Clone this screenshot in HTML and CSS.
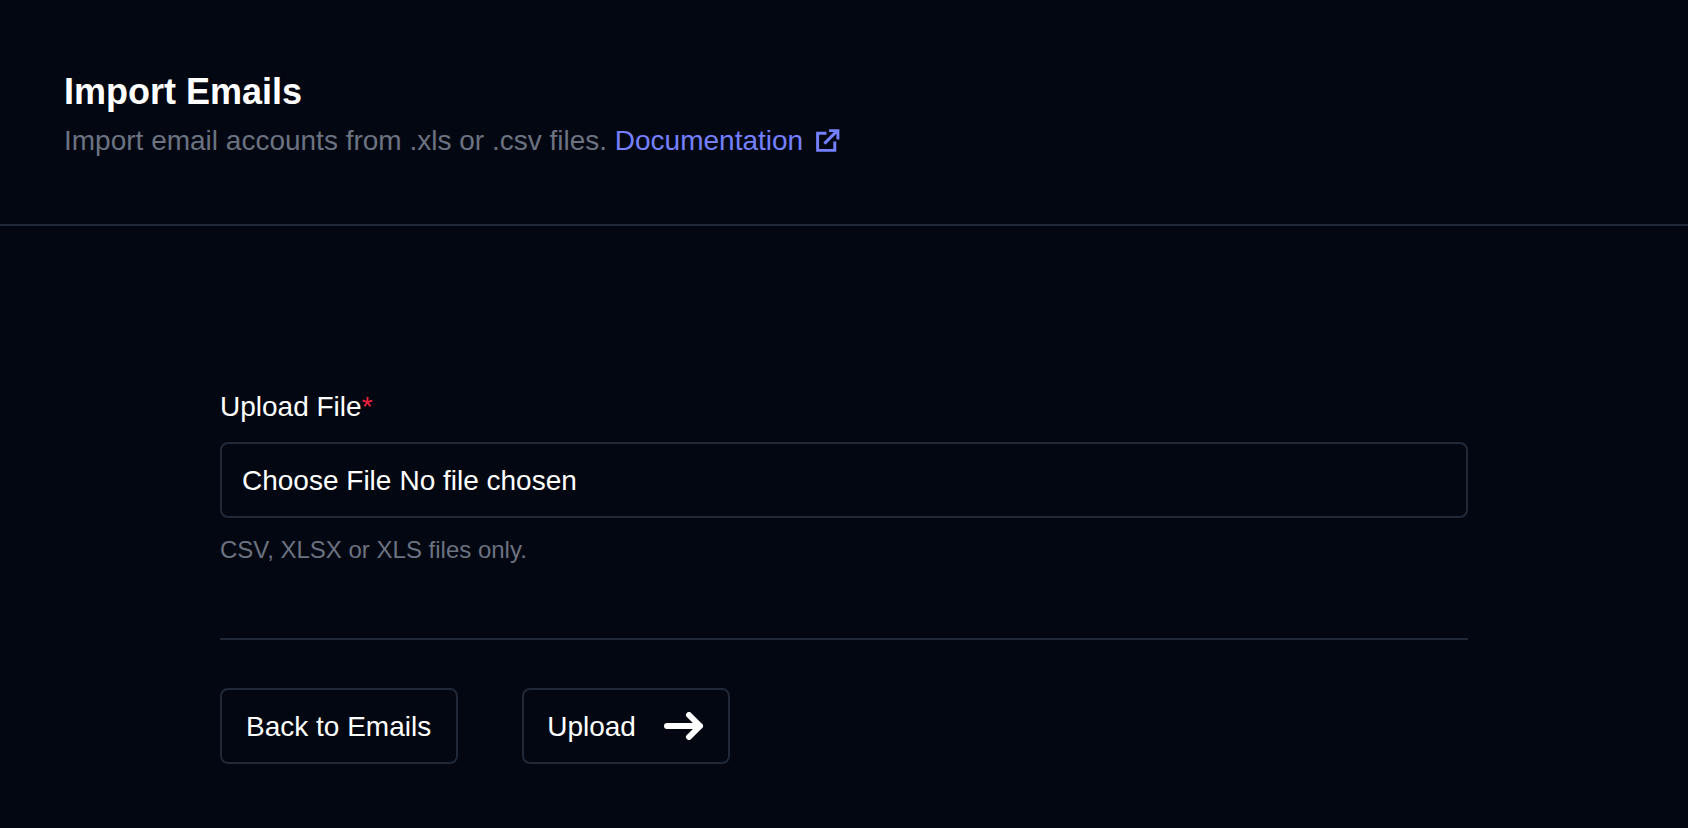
FILE: index.html
```html
<!DOCTYPE html>
<html lang="en">
  <head>
    <meta charset="UTF-8" />
    <title>Import Emails</title>
    <link rel="stylesheet" href="styles.css">
  </head>
  <body>
    <header class="page-header">
      <h1>Import Emails</h1>
      <p>
        Import email accounts from .xls or .csv files.
        <a href="#" class="doc-link">Documentation
          <svg class="external-icon" viewBox="0 0 24 24" fill="none" stroke="currentColor" stroke-width="2.8" stroke-linecap="butt">
            <path d="M11 5H2.5v16.5H19V13" />
            <path d="M9 15L21.5 2.5M13.5 2.5h8.5v8.5" />
          </svg>
        </a>
      </p>
    </header>
    <main class="content">
      <form class="upload-form">
        <label for="emailFile">Upload File<span class="required">*</span></label>
        <input type="file" id="emailFile" name="emailFile" class="file-input" />
        <p class="hint">CSV, XLSX or XLS files only.</p>
        <div class="form-actions">
          <a href="#" class="btn btn-back">Back to Emails</a>
          <button type="button" class="btn btn-upload">
            Upload
            <svg class="arrow-icon" viewBox="0 0 40 28" fill="none" stroke="currentColor" stroke-width="6" stroke-linecap="round" stroke-linejoin="round">
              <path d="M3 14h33M25 3l11 11-11 11" />
            </svg>
          </button>
        </div>
      </form>
    </main>
  </body>
</html>
```

FILE: styles.css
```css
* {
  box-sizing: border-box;
}
body {
  margin: 0;
  height: 828px;
  overflow: hidden;
  background-color: #030712;
  color: #fff;
  font-family: "Liberation Sans", Arial, sans-serif;
  font-size: 28px;
}
.page-header {
  height: 226px;
  padding: 69px 64px 0;
  border-bottom: 2px solid #1f2937;
}
.page-header h1 {
  margin: 0;
  font-size: 36px;
  line-height: 46px;
  font-weight: 700;
}
.page-header p {
  margin: 3px 0 0;
  font-size: 28px;
  line-height: 46px;
  color: #6b7280;
}
.doc-link {
  color: #7480ff;
  text-decoration: none;
}
.external-icon {
  width: 25px;
  height: 25px;
  margin-left: 4px;
  vertical-align: -3px;
}
.content {
  padding: 161px 220px 0;
}
.upload-form label {
  display: block;
  line-height: 40px;
}
.required {
  color: #f5203e;
}
.file-input {
  display: block;
  width: 100%;
  height: 76px;
  margin-top: 15px;
  padding: 1px 20px 0;
  background: transparent;
  border: 2px solid #1f2937;
  border-radius: 8px;
  color: #fff;
  font: inherit;
  line-height: 72px;
}
.file-input::file-selector-button {
  margin: 0 8px 0 0;
  padding: 0;
  background: none;
  border: none;
  color: #fff;
  font: inherit;
}
.hint {
  margin: 16px 0 0;
  font-size: 24px;
  line-height: 32px;
  color: #6b7280;
}
.form-actions {
  display: flex;
  gap: 64px;
  margin-top: 72px;
  padding-top: 48px;
  border-top: 2px solid #1f2937;
}
.btn {
  display: flex;
  align-items: center;
  height: 76px;
  padding-top: 2px;
  background: none;
  border: 2px solid #1f2937;
  border-radius: 8px;
  color: #fff;
  font: inherit;
  text-decoration: none;
}
.btn-back {
  padding-left: 24px;
  padding-right: 25px;
}
.btn-upload {
  padding-left: 23px;
  padding-right: 24px;
}
.arrow-icon {
  width: 40px;
  height: 28px;
  margin-left: 28px;
  margin-top: -2px;
}
```
